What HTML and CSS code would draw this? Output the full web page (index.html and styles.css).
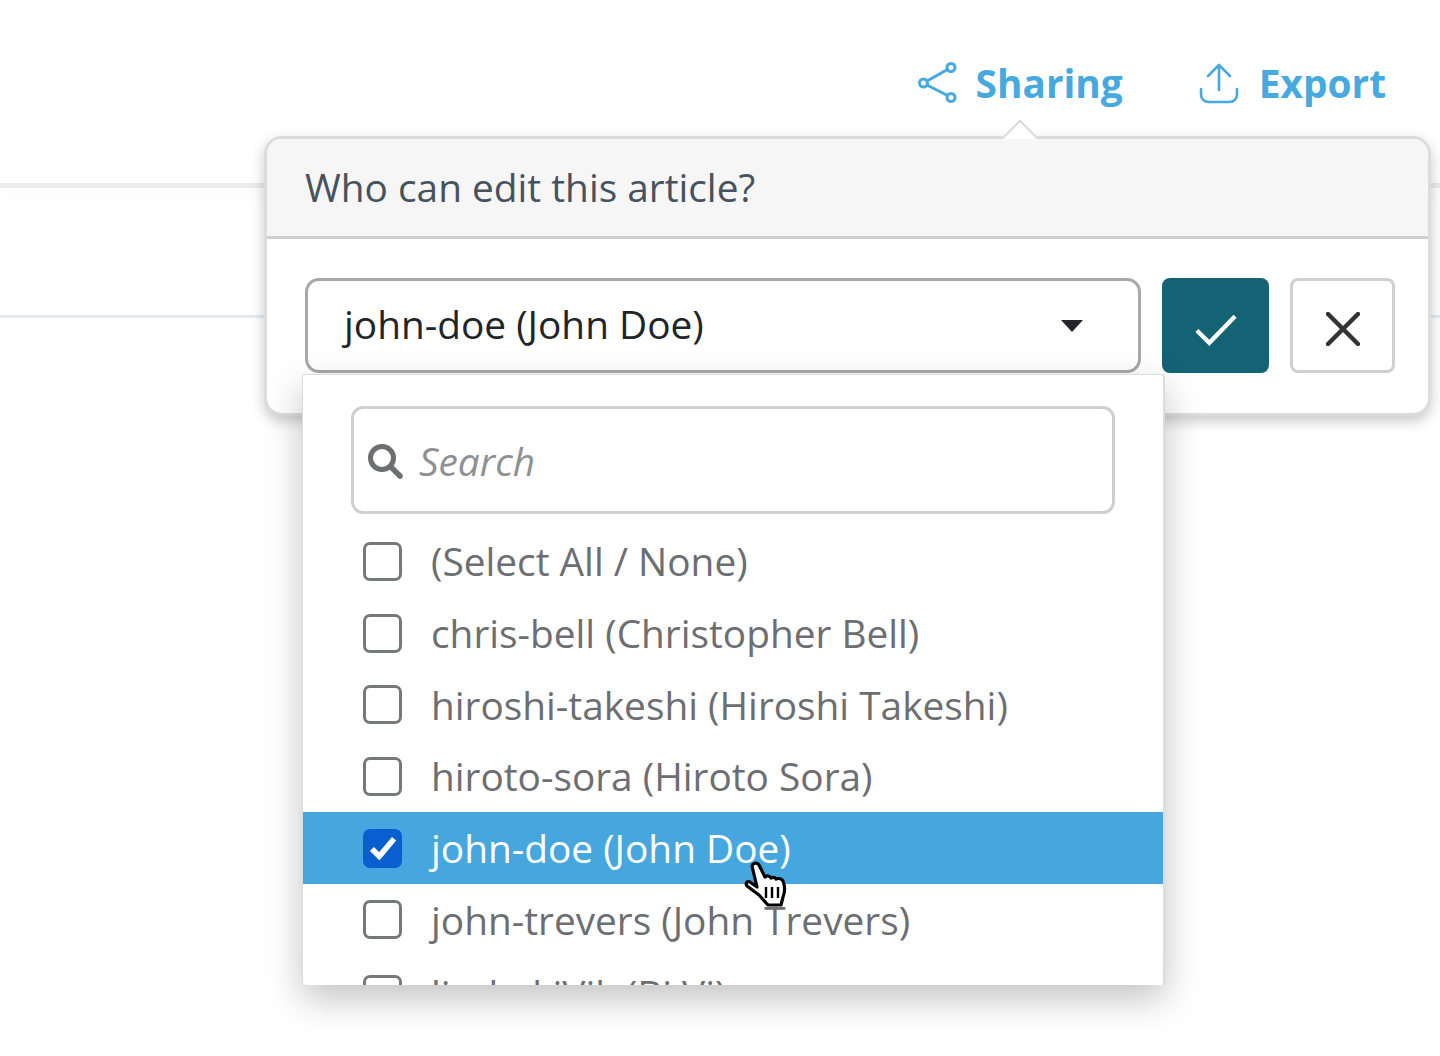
FILE: index.html
```html
<!DOCTYPE html>
<html lang="en">
<head>
    <meta charset="UTF-8">
    <title>Sharing</title>
    <link rel="stylesheet" href="styles.css">
</head>
<body>
    <div class="toolbar">
        <a class="tool tool-sharing">
            <svg class="tool-icon" viewBox="0 0 40 42" width="40" height="42" fill="none" stroke="#46a9e0" stroke-width="3" stroke-linecap="round">
                <circle cx="5.500" cy="21" r="4"/>
                <circle cx="33" cy="5.500" r="4"/>
                <circle cx="33" cy="35.500" r="4"/>
                <path d="M9 19 29.500 7.500M9 23 29.500 33.500"/>
            </svg>
            Sharing
        </a>
        <a class="tool tool-export">
            <svg class="tool-icon" viewBox="0 0 40 42" width="40" height="42" fill="none" stroke="#46a9e0" stroke-width="2.600" stroke-linecap="round" stroke-linejoin="round">
                <path d="M20 28V3M9 14 20 3l11 11"/>
                <path d="M2 27v5c0 5 3 8 8 8h20c5 0 8-3 8-8v-5"/>
            </svg>
            Export
        </a>
    </div>

    <div class="rule-thick"></div>
    <div class="rule-thin"></div>

    <div class="popover">
        <div class="popover-arrow"></div>
        <div class="popover-head">Who can edit this article?</div>
        <div class="popover-body">
            <div class="select">
                <span class="select-text">john-doe (John Doe)</span>
                <span class="caret"></span>
            </div>
            <button class="btn btn-ok">
                <svg viewBox="0 0 44 34" width="42" height="33" fill="none" stroke="#fff" stroke-width="4.500">
                    <path d="M2 18 15 31 42 3"/>
                </svg>
            </button>
            <button class="btn btn-cancel">
                <svg viewBox="0 0 34 34" width="34" height="34" fill="none" stroke="#333" stroke-width="4.500" stroke-linecap="round">
                    <path d="M2 2 32 32M32 2 2 32"/>
                </svg>
            </button>
        </div>
    </div>

    <div class="dropdown">
        <div class="search">
            <svg viewBox="0 0 36 36" width="36" height="36" fill="none" stroke="#6d6e71">
                <circle cx="15" cy="15" r="11.500" stroke-width="5"/>
                <path d="M24 24 33 33" stroke-width="5.500" stroke-linecap="round"/>
            </svg>
            <span class="search-text">Search</span>
        </div>
        <ul class="options">
            <li class="option"><span class="box"></span>(Select All / None)</li>
            <li class="option"><span class="box"></span>chris-bell (Christopher Bell)</li>
            <li class="option"><span class="box"></span>hiroshi-takeshi (Hiroshi Takeshi)</li>
            <li class="option"><span class="box"></span>hiroto-sora (Hiroto Sora)</li>
            <li class="option selected">
                <span class="box checked">
                    <svg viewBox="0 0 30 26" width="28" height="24" fill="none" stroke="#fff" stroke-width="6">
                        <path d="M3 14 11 22 27 3"/>
                    </svg>
                </span>
                john-doe (John Doe)
            </li>
            <li class="option"><span class="box"></span>john-trevers (John Trevers)</li>
            <li class="option option-clipped"><span class="box"></span>linda-kiVik (Bi Vi)</li>
        </ul>
    </div>

    <svg class="cursor" viewBox="0 0 44 48" width="44" height="48">
        <path d="M9 5c1-3 5-4 7-1l6 12c2-2 5-1 6 1 2-1 4-1 5 1 3-1 6 0 7 2 2 5 2 11 0 16l-2 8H25l-9-10L4 25c-2-3 0-5 3-4l7 5z" fill="#fff" stroke="#000" stroke-width="3.200" stroke-linejoin="round"/>
        <path d="M23 26v11M29 26v11M35 26v11" stroke="#000" stroke-width="2.400"/>
    </svg>
</body>
</html>
```

FILE: styles.css
```css
* {
    margin: 0;
    padding: 0;
    box-sizing: border-box;
    font-family: 'Open Sans', sans-serif;
}

body {
    position: relative;
    height: 1056px;
    overflow: hidden;
    background: #fff;
}

/* Toolbar */
.toolbar {
    display: flex;
    justify-content: flex-end;
    gap: 76px;
    height: 136px;
    padding: 62px 54px 0 0;
}

.tool {
    display: flex;
    align-items: center;
    gap: 18px;
    height: 42px;
    font-size: 38.800px;
    font-weight: 700;
    color: #46a9e0;
}

.tool-export {
    gap: 20px;
}

.tool-icon {
    flex: none;
}

/* Page behind the popover */
.rule-thick {
    height: 5px;
    margin-top: 47px;
    background: #ececec;
    box-shadow: 0 6px 18px rgba(0, 0, 0, 0.05);
}

.rule-thin {
    height: 3px;
    margin-top: 127px;
    background: #e2ebf4;
}

/* Popover */
.popover {
    position: absolute;
    left: 264px;
    top: 136px;
    width: 1167px;
    height: 280px;
    background: #fff;
    border: 3px solid #dcdcdc;
    border-radius: 18px;
    box-shadow: 0 5px 14px rgba(0, 0, 0, 0.22);
}

.popover-arrow {
    position: absolute;
    left: 740px;
    top: -15px;
    width: 26px;
    height: 26px;
    background: #fff;
    border-top: 2px solid #d8d8d8;
    border-left: 2px solid #d8d8d8;
    transform: rotate(45deg) scale(0.95);
}

.popover-head {
    position: relative;
    height: 100px;
    padding: 23px 0 0 38px;
    font-size: 38.800px;
    line-height: 50px;
    color: #47525f;
    background: #f6f6f6;
    border-bottom: 3px solid #cfcfcf;
    border-radius: 15px 15px 0 0;
}

.popover-body {
    display: flex;
    gap: 21px;
    padding: 39px 0 0 38px;
}

.select {
    display: flex;
    justify-content: space-between;
    align-items: center;
    width: 836px;
    height: 95px;
    padding: 0 55px 0 36px;
    font-size: 38.800px;
    color: #212529;
    border: 3px solid #a8a8a8;
    border-radius: 14px;
}

.select-text {
    margin-bottom: 4px;
}

.caret {
    width: 0;
    height: 0;
    border-left: 11px solid transparent;
    border-right: 11px solid transparent;
    border-top: 12px solid #212529;
}

.btn {
    display: flex;
    justify-content: center;
    align-items: center;
    height: 95px;
    padding-top: 7px;
    border-radius: 8px;
    background: #fff;
}

.btn-ok {
    width: 107px;
    background: #146374;
    border: none;
}

.btn-cancel {
    width: 105px;
    border: 3px solid #d0d0d0;
}

/* Dropdown */
.dropdown {
    position: absolute;
    left: 302px;
    top: 374px;
    width: 863px;
    height: 611px;
    padding: 31px 0 0;
    overflow: hidden;
    background: #fff;
    border: 1px solid #dcdcdc;
    border-right-width: 2px;
    border-bottom: none;
    border-radius: 4px;
    box-shadow: 0 14px 36px rgba(0, 0, 0, 0.24);
}

.search {
    display: flex;
    align-items: center;
    gap: 16px;
    width: 764px;
    height: 108px;
    margin-left: 48px;
    padding: 2px 0 0 13px;
    border: 3px solid #cfcfcf;
    border-radius: 12px;
}

.search-text {
    font-size: 38.800px;
    font-style: italic;
    color: #8f9092;
}

.options {
    list-style: none;
    margin-top: 11.500px;
}

.option {
    display: flex;
    align-items: center;
    gap: 29px;
    height: 71.700px;
    padding-left: 60px;
    font-size: 38.800px;
    color: #6d6e71;
}

.option-clipped {
    margin-top: 3px;
}

.option.selected {
    color: #fff;
    background: #46a7df;
}

.box {
    display: flex;
    justify-content: center;
    align-items: center;
    flex: none;
    width: 39px;
    height: 39px;
    background: #fff;
    border: 3px solid #77787b;
    border-radius: 7px;
}

.box.checked {
    background: #0a5fd0;
    border: none;
}

.cursor {
    position: absolute;
    left: 743px;
    top: 861px;
}
```
